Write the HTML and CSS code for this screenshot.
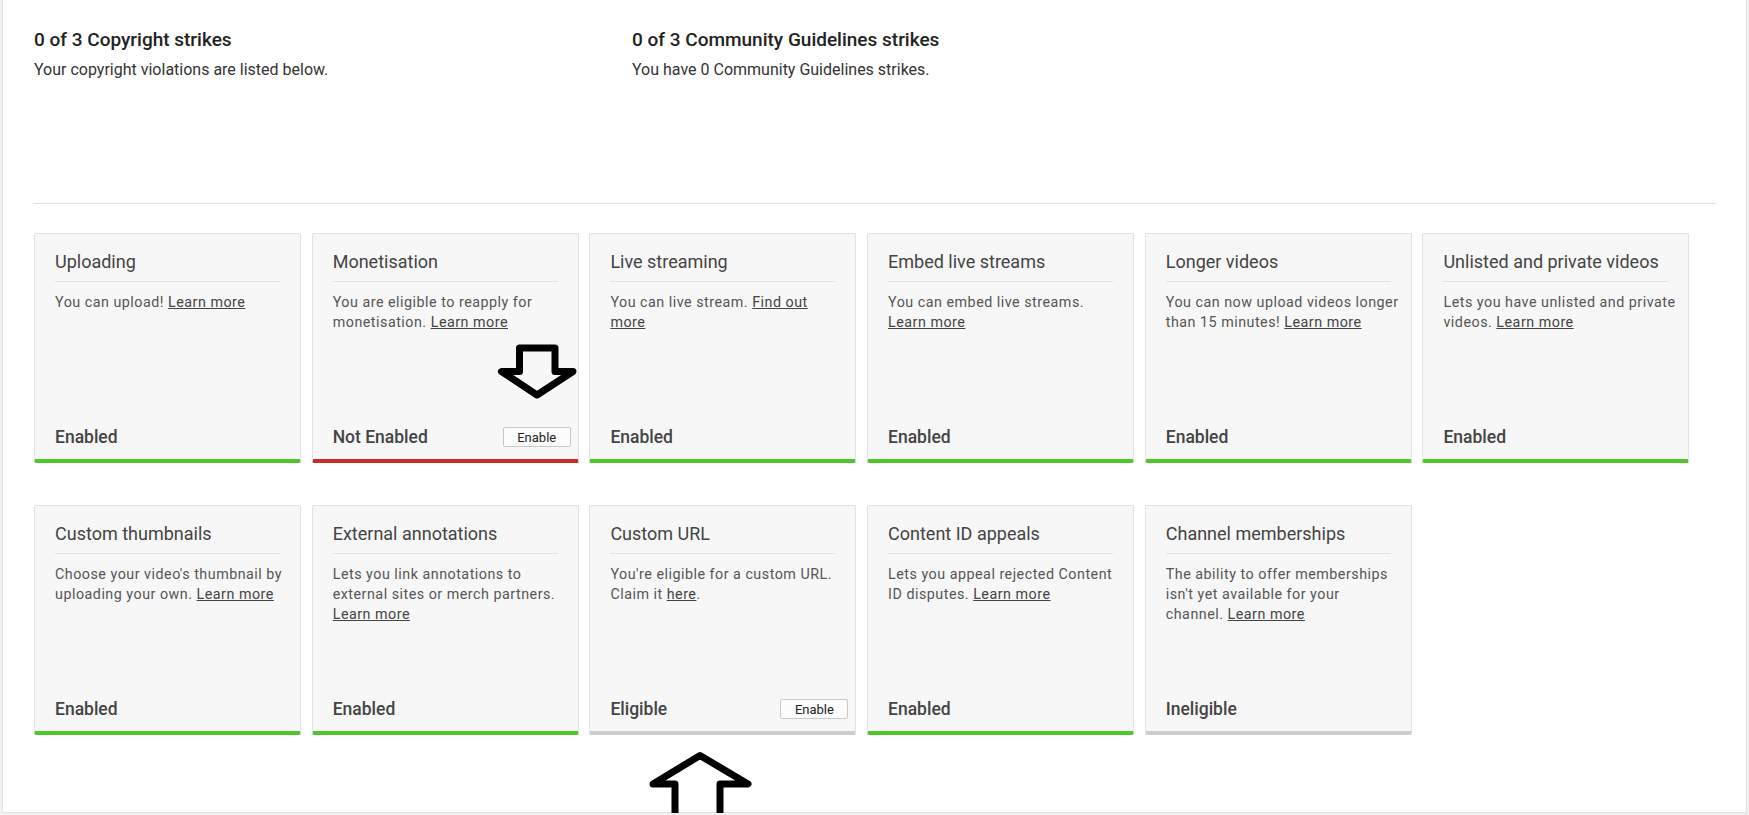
FILE: index.html
```html
<!DOCTYPE html>
<html lang="en">
<head>
    <meta charset="UTF-8">
    <title>Channel status and features</title>
    <link rel="stylesheet" href="styles.css">
</head>
<body>
    <div class="page">
        <div class="strikes">
            <div class="strike">
                <h2>0 of 3 Copyright strikes</h2>
                <p>Your copyright violations are listed below.</p>
            </div>
            <div class="strike">
                <h2>0 of 3 Community Guidelines strikes</h2>
                <p>You have 0 Community Guidelines strikes.</p>
            </div>
        </div>

        <div class="features">
            <div class="card enabled">
                <div class="card-title">Uploading</div>
                <div class="card-text">You can upload! <a href="#">Learn more</a></div>
                <div class="card-foot"><span class="status">Enabled</span></div>
            </div>
            <div class="card not-enabled">
                <div class="card-title">Monetisation</div>
                <div class="card-text">You are eligible to reapply for monetisation. <a href="#">Learn more</a></div>
                <div class="card-foot"><span class="status">Not Enabled</span><button>Enable</button></div>
            </div>
            <div class="card enabled">
                <div class="card-title">Live streaming</div>
                <div class="card-text">You can live stream. <a href="#">Find out more</a></div>
                <div class="card-foot"><span class="status">Enabled</span></div>
            </div>
            <div class="card enabled">
                <div class="card-title">Embed live streams</div>
                <div class="card-text">You can embed live streams. <a href="#">Learn more</a></div>
                <div class="card-foot"><span class="status">Enabled</span></div>
            </div>
            <div class="card enabled">
                <div class="card-title">Longer videos</div>
                <div class="card-text">You can now upload videos longer than 15 minutes! <a href="#">Learn more</a></div>
                <div class="card-foot"><span class="status">Enabled</span></div>
            </div>
            <div class="card enabled">
                <div class="card-title">Unlisted and private videos</div>
                <div class="card-text">Lets you have unlisted and private videos. <a href="#">Learn more</a></div>
                <div class="card-foot"><span class="status">Enabled</span></div>
            </div>

            <div class="card enabled">
                <div class="card-title">Custom thumbnails</div>
                <div class="card-text">Choose your video's thumbnail by uploading your own. <a href="#">Learn more</a></div>
                <div class="card-foot"><span class="status">Enabled</span></div>
            </div>
            <div class="card enabled">
                <div class="card-title">External annotations</div>
                <div class="card-text">Lets you link annotations to external sites or merch partners. <a href="#">Learn more</a></div>
                <div class="card-foot"><span class="status">Enabled</span></div>
            </div>
            <div class="card eligible">
                <div class="card-title">Custom URL</div>
                <div class="card-text">You're eligible for a custom URL. Claim it <a href="#">here</a>.</div>
                <div class="card-foot"><span class="status">Eligible</span><button>Enable</button></div>
            </div>
            <div class="card enabled">
                <div class="card-title">Content ID appeals</div>
                <div class="card-text">Lets you appeal rejected Content ID disputes. <a href="#">Learn more</a></div>
                <div class="card-foot"><span class="status">Enabled</span></div>
            </div>
            <div class="card eligible">
                <div class="card-title">Channel memberships</div>
                <div class="card-text">The ability to offer memberships isn't yet available for your channel. <a href="#">Learn more</a></div>
                <div class="card-foot"><span class="status">Ineligible</span></div>
            </div>
        </div>
    </div>

    <!-- hand-drawn arrows over the screenshot -->
    <svg class="marks" width="1749" height="815" viewBox="0 0 1749 815">
        <polygon points="519.5,348 555,348 555,371.5 573,371.5 537,395 501.5,371.5 519.5,371.5"/>
        <polygon points="700,755.5 748,784 720,784 720,830 675,830 675,784 653,784"/>
    </svg>
</body>
</html>
```

FILE: styles.css
```css
body {
    margin: 0;
    background-color: #f1f1f1;
    font-family: Roboto, "Liberation Sans", Arial, sans-serif;
    color: #333;
    position: relative;
    overflow: hidden;
}
.page {
    margin: 0 2px;
    height: 813px;
    box-sizing: border-box;
    background-color: #fff;
    border: 1px solid #e3e3e3;
    border-top: none;
    padding: 28px 30px 0 31px;
}
.strikes {
    display: grid;
    grid-template-columns: 598px 1fr;
    padding-bottom: 123px;
    border-bottom: 1px solid #e2e2e2;
}
.strike h2 {
    margin: 0;
    font-size: 19px;
    line-height: 24px;
    font-weight: 500;
    color: #222;
}
.strike p {
    margin: 8px 0 0;
    font-size: 16px;
    line-height: 20px;
    color: #333;
}
.features {
    display: grid;
    grid-template-columns: repeat(6, 267px);
    column-gap: 10.7px;
    row-gap: 42px;
    margin-top: 29px;
}
.card {
    height: 230px;
    box-sizing: border-box;
    background-color: #f7f7f7;
    border: 1px solid #e2e2e2;
    border-bottom: 4px solid #ccc;
    border-radius: 2px;
    display: flex;
    flex-direction: column;
}
.card.enabled {
    border-bottom-color: #4dc62c;
}
.card.not-enabled {
    border-bottom-color: #cc2b27;
}
.card-title {
    margin: 16px 20px 0;
    padding-bottom: 7px;
    border-bottom: 1px solid #e2e2e2;
    font-size: 18px;
    line-height: 24px;
    color: #444;
}
.card-text {
    flex: 1;
    margin: 10px 11.1px 0 20px;
    font-size: 14.3px;
    letter-spacing: 0.5px;
    line-height: 20px;
    color: #555;
}
.card-text a {
    color: #444;
}
.card-foot {
    display: flex;
    align-items: center;
    justify-content: space-between;
    padding: 0 7px 10px 20px;
    height: 24px;
}
.status {
    font-size: 17.5px;
    line-height: 24px;
    font-weight: 500;
    color: #444;
}
button {
    width: 68px;
    height: 20px;
    padding: 0;
    background-color: #fcfcfc;
    border: 1px solid #c8c8c8;
    border-radius: 2px;
    font-family: Roboto, "Liberation Sans", Arial, sans-serif;
    font-size: 13px;
    color: #222;
    cursor: pointer;
}
.marks {
    position: absolute;
    left: 0;
    top: 0;
    pointer-events: none;
}
.marks polygon {
    fill: none;
    stroke: #000;
    stroke-width: 7;
    stroke-linejoin: round;
}
```
